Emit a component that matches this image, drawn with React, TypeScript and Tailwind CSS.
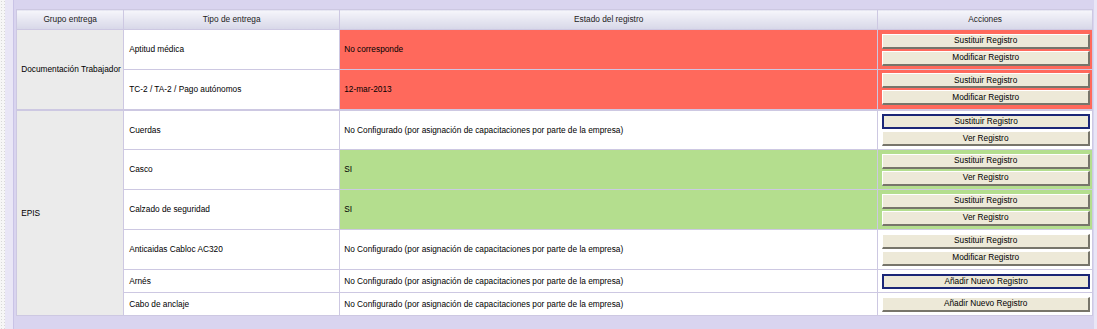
import React from "react";

type Row = {
  tipo: string;
  estado: string;
  color: "red" | "green" | "white";
  buttons: { label: string; focused?: boolean }[];
  h: number;
};

const doc: Row[] = [
  { tipo: "Aptitud médica", estado: "No corresponde", color: "red", h: 40, buttons: [{ label: "Sustituir Registro" }, { label: "Modificar Registro" }] },
  { tipo: "TC-2 / TA-2 / Pago autónomos", estado: "12-mar-2013", color: "red", h: 40, buttons: [{ label: "Sustituir Registro" }, { label: "Modificar Registro" }] },
];

const NC = "No Configurado (por asignación de capacitaciones por parte de la empresa)";

const epis: Row[] = [
  { tipo: "Cuerdas", estado: NC, color: "white", h: 40, buttons: [{ label: "Sustituir Registro", focused: true }, { label: "Ver Registro" }] },
  { tipo: "Casco", estado: "SI", color: "green", h: 40, buttons: [{ label: "Sustituir Registro" }, { label: "Ver Registro" }] },
  { tipo: "Calzado de seguridad", estado: "SI", color: "green", h: 40, buttons: [{ label: "Sustituir Registro" }, { label: "Ver Registro" }] },
  { tipo: "Anticaidas Cabloc AC320", estado: NC, color: "white", h: 40, buttons: [{ label: "Sustituir Registro" }, { label: "Modificar Registro" }] },
  { tipo: "Arnés", estado: NC, color: "white", h: 23, buttons: [{ label: "Añadir Nuevo Registro", focused: true }] },
  { tipo: "Cabo de anclaje", estado: NC, color: "white", h: 23, buttons: [{ label: "Añadir Nuevo Registro" }] },
];

function bg(c: Row["color"]) {
  if (c === "red") return "bg-[#ff695c]";
  if (c === "green") return "bg-[#b4de8e]";
  return "bg-white";
}

function Btn({ label, focused }: { label: string; focused?: boolean }) {
  return (
    <div
      className={
        focused
          ? "h-[15px] flex items-center justify-center bg-[#ede9d8] border-2 border-[#1b2677] text-[8.3px] leading-none text-black"
          : "h-[15px] flex items-center justify-center bg-[#ede9d8] border-t border-l border-t-white border-l-white border-r-2 border-b-2 border-r-[#77756a] border-b-[#77756a] text-[8.3px] leading-none text-black"
      }
    >
      {label}
    </div>
  );
}

const cellB = "border border-[#cdc8e2]";

function DataRow({ r, first, group, span, groupTop }: { r: Row; first: boolean; group: string; span: number; groupTop?: boolean }) {
  const top = groupTop ? "border-t-2 border-t-[#cdc8e2]" : "";
  return (
    <tr style={{ height: r.h }}>
      {first && (
        <td rowSpan={span} className={`${cellB} ${top} bg-[#ebebeb] pl-[4px] align-middle whitespace-nowrap`}>
          {group}
        </td>
      )}
      <td className={`${cellB} ${top} bg-white pl-[5px] align-middle whitespace-nowrap`}>{r.tipo}</td>
      <td className={`${cellB} ${top} ${bg(r.color)} pl-[4px] align-middle whitespace-nowrap`}>{r.estado}</td>
      <td className={`${cellB} ${top} ${bg(r.color)} pl-[4px] pr-[2px] align-middle`}>
        <div className="flex flex-col gap-[2px]">
          {r.buttons.map((b, i) => (
            <Btn key={i} label={b.label} focused={b.focused} />
          ))}
        </div>
      </td>
    </tr>
  );
}

export default function App() {
  return (
    <div className="w-[1097px] h-[329px] flex bg-white overflow-hidden" style={{ fontFamily: '"Liberation Sans", Arial, sans-serif' }}>
      <div
        className="w-[5px] h-full bg-[#f6f6f6]"
        style={{ backgroundImage: "radial-gradient(#d8d8d8 0.6px, transparent 0.8px)", backgroundSize: "3px 3px" }}
      />
      <div className="w-[10px] h-full bg-[#e9e6f6] border-r border-[#c9c3e6]" />
      <div className="flex-1 h-full bg-[#d9d4ef] pt-[9px] pl-[2px] pr-[1px]">
        <table className="border-collapse text-[8.3px] text-black table-fixed w-[1076px]">
          <colgroup>
            <col style={{ width: 107 }} />
            <col style={{ width: 216 }} />
            <col style={{ width: 538 }} />
            <col style={{ width: 215 }} />
          </colgroup>
          <thead>
            <tr className="h-[20px]">
              {["Grupo entrega", "Tipo de entrega", "Estado del registro", "Acciones"].map((h) => (
                <th key={h} className={`${cellB} font-normal text-[#222] bg-gradient-to-b from-[#f6f6fb] to-[#d7d7e8] text-center align-middle`}>
                  {h}
                </th>
              ))}
            </tr>
          </thead>
          <tbody>
            {doc.map((r, i) => (
              <DataRow key={r.tipo} r={r} first={i === 0} group="Documentación Trabajador" span={doc.length} />
            ))}
            {epis.map((r, i) => (
              <DataRow key={r.tipo} r={r} first={i === 0} group="EPIS" span={epis.length} groupTop={i === 0} />
            ))}
          </tbody>
        </table>
      </div>
      <div className="w-[3px] h-full bg-[#e9e6f6]" />
    </div>
  );
}
